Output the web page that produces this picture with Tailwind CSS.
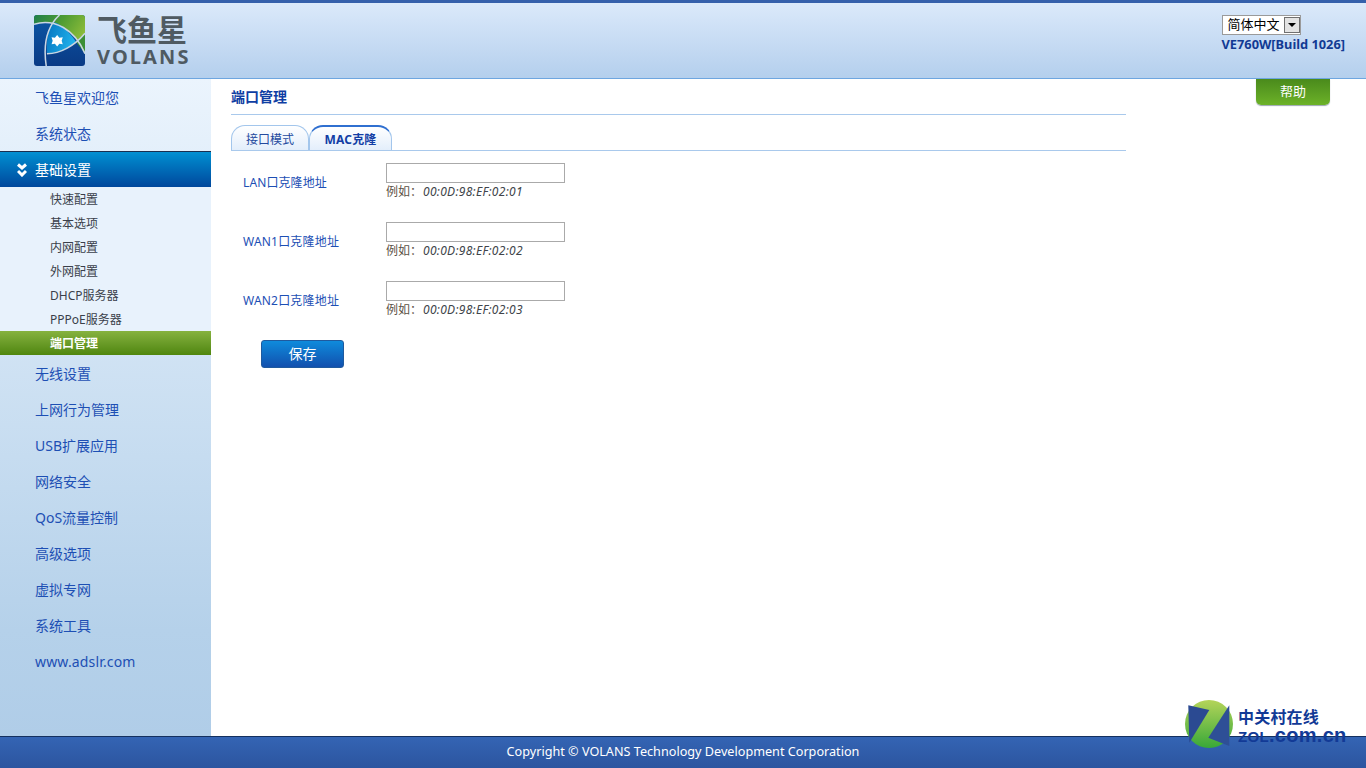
<!DOCTYPE html>
<html lang="zh">
<head>
<meta charset="utf-8">
<title>VOLANS</title>
<script src="https://cdn.jsdelivr.net/npm/@tailwindcss/browser@4"></script>
</head>
<body class="relative h-[768px] w-[1366px] overflow-hidden bg-white font-['Noto_Sans','Noto_Sans_CJK_SC',sans-serif] text-[12px]">
<div class="flex h-[768px] flex-col">
  <header class="flex h-[79px] shrink-0 justify-between border-t-[3px] border-b border-t-[#3560ab] border-b-[#6ea6e0] bg-gradient-to-b from-[#dbe9fa] to-[#b4cfed]">
    <div class="flex items-start pl-[34px] pt-[12px]">
      <svg width="51" height="51" viewBox="0 0 50 50" class="rounded-[3px]">
        <defs>
          <linearGradient id="g1" x1="0" y1="0" x2="1" y2="0.5"><stop offset="0" stop-color="#1f7f4a"/><stop offset="0.5" stop-color="#4f9c32"/><stop offset="1" stop-color="#8fbd3a"/></linearGradient>
          <linearGradient id="g2" x1="0" y1="0" x2="0" y2="1"><stop offset="0" stop-color="#0b57a6"/><stop offset="1" stop-color="#0a3a85"/></linearGradient>
          <linearGradient id="g3" x1="0" y1="0" x2="1" y2="0.3"><stop offset="0" stop-color="#0573bf"/><stop offset="1" stop-color="#1fb0ea"/></linearGradient>
        </defs>
        <rect width="50" height="50" fill="url(#g2)"/>
        <path d="M0 0H50V38C42 18 24 2 0 9Z" fill="url(#g1)"/>
        <path d="M41 26C33 14 24 7 18 7C14 13 12 24 12.700 38C24 38 34 33 41 26Z" fill="url(#g3)"/>
        <path d="M41 26L50 18V38Z" fill="#3b8f35"/>
        <path d="M0 9C20 3 40 14 50 38M25 0C12 12 9 30 12 50M50 18C40 30 26 38 12.700 38" fill="none" stroke="#c9d6e2" stroke-width="1.500"/>
        <path d="M22.700 19.500l2.200 2.700 3.300-.500-1.100 3.500 1.100 3.500-3.300-.500-2.200 2.700-2.200-2.700-3.300.500 1.100-3.500-1.100-3.500 3.300.500z" fill="#fff"/>
      </svg>
      <div class="ml-[12px] flex flex-col text-[#4f5a62]">
        <span class="h-[30px] text-[30px] font-bold leading-[30px]">飞鱼星</span>
        <span class="mt-[2px] text-[20px] font-bold leading-[20px] tracking-[2.1px]">VOLANS</span>
      </div>
    </div>
    <div class="flex flex-col items-start pr-[21px] pt-[12px]">
      <div class="flex h-[20px] w-[79px] items-center justify-between border border-[#9a9a9a] bg-white pl-[5px] text-[13px] leading-none text-black">
        <span class="-mt-[1px]">简体中文</span>
        <span class="flex h-[16px] w-[16px] items-center justify-center border border-[#707070] bg-[#e3e3e3]"><span class="h-0 w-0 border-x-[4px] border-t-[4px] border-x-transparent border-t-black"></span></span>
      </div>
      <div class="mt-[1px] text-[12.8px] font-bold leading-[16px] text-[#123a93]">VE760W[Build 1026]</div>
    </div>
  </header>
  <div class="flex min-h-0 flex-1">
    <aside class="w-[211px] shrink-0 bg-gradient-to-b from-[#ebf4fd] via-[#b5d1ea] via-[84%] to-[#b0cde8] text-[14px] text-[#1d4fb4]">
      <a class="flex h-[36px] items-center pl-[35px]">飞鱼星欢迎您</a>
      <a class="flex h-[36px] items-center pl-[35px]">系统状态</a>
      <a class="flex h-[36px] items-center border-t border-[#1a2f50] bg-gradient-to-b from-[#0490d2] to-[#00479c] pl-[17px] text-white">
        <svg width="10" height="14" viewBox="0 0 10 14" class="mr-[8px]"><path d="M1 1.500l4 3.500 4-3.500M1 8l4 4 4-4" fill="none" stroke="#fff" stroke-width="3"/></svg>基础设置
      </a>
      <div class="bg-[#e8f2fc] text-[12px] leading-[25px] text-[#3a3f4a]">
        <a class="block h-[24px] pl-[50px]">快速配置</a>
        <a class="block h-[24px] pl-[50px]">基本选项</a>
        <a class="block h-[24px] pl-[50px]">内网配置</a>
        <a class="block h-[24px] pl-[50px]">外网配置</a>
        <a class="block h-[24px] pl-[50px]">DHCP服务器</a>
        <a class="block h-[24px] pl-[50px]">PPPoE服务器</a>
        <a class="block h-[24px] bg-gradient-to-b from-[#86b23e] to-[#4f860c] pl-[50px] font-bold text-white">端口管理</a>
      </div>
      <a class="flex h-[36px] items-center pl-[35px]">无线设置</a>
      <a class="flex h-[36px] items-center pl-[35px]">上网行为管理</a>
      <a class="flex h-[36px] items-center pl-[35px]">USB扩展应用</a>
      <a class="flex h-[36px] items-center pl-[35px]">网络安全</a>
      <a class="flex h-[36px] items-center pl-[35px]">QoS流量控制</a>
      <a class="flex h-[36px] items-center pl-[35px]">高级选项</a>
      <a class="flex h-[36px] items-center pl-[35px]">虚拟专网</a>
      <a class="flex h-[36px] items-center pl-[35px]">系统工具</a>
      <a class="flex h-[36px] items-center pl-[35px] tracking-[0.15px]">www.adslr.com</a>
    </aside>
    <main class="flex flex-1 items-start">
      <div class="ml-[20px] w-[895px]">
        <h1 class="h-[36px] border-b border-[#a9c9ec] text-[14px] font-bold leading-[36px] text-[#0f3ea3]">端口管理</h1>
        <div class="mt-[10px] flex h-[26px] items-end border-b border-[#a9c9ec] text-[12px]">
          <a class="flex h-[25px] w-[78px] items-center justify-center rounded-t-[14px] border border-b-0 border-[#a3c6ec] bg-gradient-to-b from-white to-[#e3eefb] pt-[3px] text-[#244a9e]">接口模式</a>
          <a class="flex h-[25px] w-[83px] items-center justify-center rounded-t-[14px] border border-b-0 border-t-2 border-[#a3c6ec] border-t-[#2f6fd0] bg-gradient-to-b from-white to-[#e3eefb] pt-[2px] font-bold tracking-[0.2px] text-[#123ea5]">MAC克隆</a>
        </div>
        <form class="mt-[12px] pl-[12px]">
          <div class="flex h-[59px] items-start">
            <label class="w-[143px] pt-[11px] tracking-[0.1px] text-[#1d4fb4]">LAN口克隆地址</label>
            <div>
              <div class="h-[20px] w-[179px] border border-[#aaaaaa] bg-white"></div>
              <p class="leading-[17px] text-[#5b5246]">例如：<i class="ml-[1px] tracking-[0.3px] text-[#40444a]">00:0D:98:EF:02:01</i></p>
            </div>
          </div>
          <div class="flex h-[59px] items-start">
            <label class="w-[143px] pt-[11px] tracking-[0.2px] text-[#1d4fb4]">WAN1口克隆地址</label>
            <div>
              <div class="h-[20px] w-[179px] border border-[#aaaaaa] bg-white"></div>
              <p class="leading-[17px] text-[#5b5246]">例如：<i class="ml-[1px] tracking-[0.3px] text-[#40444a]">00:0D:98:EF:02:02</i></p>
            </div>
          </div>
          <div class="flex h-[59px] items-start">
            <label class="w-[143px] pt-[11px] tracking-[0.2px] text-[#1d4fb4]">WAN2口克隆地址</label>
            <div>
              <div class="h-[20px] w-[179px] border border-[#aaaaaa] bg-white"></div>
              <p class="leading-[17px] text-[#5b5246]">例如：<i class="ml-[1px] tracking-[0.3px] text-[#40444a]">00:0D:98:EF:02:03</i></p>
            </div>
          </div>
          <button type="button" class="ml-[18px] h-[28px] w-[83px] rounded-[3px] border border-[#1f5a9e] bg-gradient-to-b from-[#0f8bdc] to-[#1250ae] text-[14px] leading-none text-white">保存</button>
        </form>
      </div>
      <a class="ml-[130px] flex h-[26px] w-[74px] items-center justify-center rounded-b-[5px] bg-gradient-to-b from-[#4a8a1c] to-[#6cb228] text-[13px] text-white shadow-[0_1px_1px_#9aa6b0]">帮助</a>
    </main>
  </div>
  <footer class="flex h-[32px] shrink-0 items-center justify-center border-t border-[#14305f] bg-gradient-to-b from-[#3464b4] to-[#2c559f] pb-[2px] text-[12.65px] text-white">Copyright © VOLANS Technology Development Corporation</footer>
</div>
<div class="absolute left-[1184px] top-[700px] flex items-start">
  <svg width="50" height="49" viewBox="0 0 50 49">
    <defs><linearGradient id="z" x1="0" y1="0" x2="0" y2="1"><stop offset="0" stop-color="#b4d45a"/><stop offset="1" stop-color="#38a838"/></linearGradient></defs>
    <circle cx="25" cy="24" r="24" fill="url(#z)"/>
    <path d="M4.300 5.300L25.300 10 5.300 42.700Z" fill="#2b4a92"/>
    <path d="M45.300 5.300V46L24.300 37.700Z" fill="#2e4f96"/>
  </svg>
  <div class="ml-[4px] mt-[7px] flex flex-col font-bold text-[#123a96]">
    <span class="text-[16px] leading-[20px] tracking-[0.2px]">中关村在线</span>
    <span class="font-['Liberation_Sans',sans-serif] text-[20px] leading-[16px] tracking-[0.3px]"><span class="text-[15px]">ZOL</span>.com.cn</span>
  </div>
</div>
</body>
</html>
